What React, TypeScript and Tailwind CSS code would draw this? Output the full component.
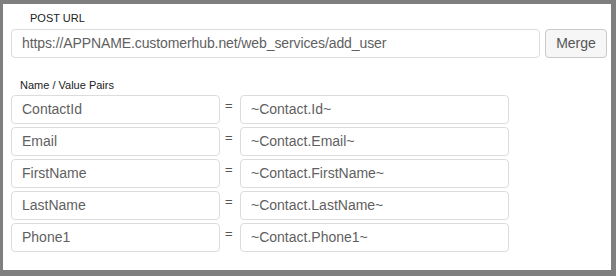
import React from "react";

const pairs = [
  { name: "ContactId", value: "~Contact.Id~" },
  { name: "Email", value: "~Contact.Email~" },
  { name: "FirstName", value: "~Contact.FirstName~" },
  { name: "LastName", value: "~Contact.LastName~" },
  { name: "Phone1", value: "~Contact.Phone1~" },
];

const inputClass =
  "h-[29px] rounded-[4px] border border-[#dcdcdc] bg-white pl-[10px] flex items-center text-[14px] text-[#5f5f5f] whitespace-nowrap";

export default function App() {
  return (
    <div
      className="w-[616px] h-[276px] bg-[#7f7f7f] pt-[4px] pl-[3px]"
      style={{ fontFamily: '"Liberation Sans", Arial, sans-serif' }}
    >
      <div className="w-[608px] h-[266px] bg-white pl-[8px] pt-[8px]">
        <div className="pl-[19px] text-[11px] leading-[13px] text-[#222]">POST URL</div>
        <div className="mt-[4px] flex gap-[5px]">
          <div className={`${inputClass} w-[529px] tracking-[-0.1px]`}>
            https://APPNAME.customerhub.net/web_services/add_user
          </div>
          <button className="h-[29px] w-[62px] rounded-[4px] border border-[#c8c8c8] bg-[#f6f6f6] text-[14px] text-[#555]">
            Merge
          </button>
        </div>
        <div className="mt-[21px] pl-[9px] text-[11px] leading-[13px] text-[#222]">
          Name / Value Pairs
        </div>
        <div className="mt-[3px] flex flex-col gap-[3px]">
          {pairs.map((p) => (
            <div key={p.name} className="flex">
              <div className={`${inputClass} w-[209px]`}>{p.name}</div>
              <div className="w-[20px] pl-[5px] pt-[3px] text-[13px] leading-[16px] text-[#555]">=</div>
              <div className={`${inputClass} w-[269px]`}>{p.value}</div>
            </div>
          ))}
        </div>
      </div>
    </div>
  );
}
